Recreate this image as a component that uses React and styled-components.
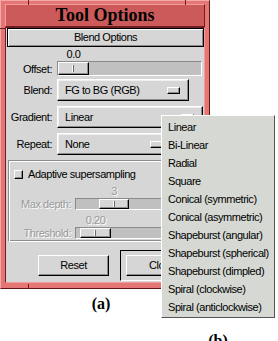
import React from 'react';
import styled, { createGlobalStyle } from 'styled-components';

const uiFont = `"Liberation Sans", Arial, sans-serif`;
const serif = `"Liberation Serif", "Times New Roman", serif`;

const GlobalStyle = createGlobalStyle`
  html, body {
    margin: 0;
    padding: 0;
    background: #fff;
  }
  body {
    font-family: ${uiFont};
    font-size: 11px;
    letter-spacing: -0.45px;
    color: #000;
  }
`;

const Figure = styled.div`
  position: relative;
  width: 278px;
  height: 341px;
  overflow: hidden;
`;

const Window = styled.div`
  position: relative;
  width: 210px;
  box-sizing: border-box;
  background: #e47676;
  border: 1px solid;
  border-color: #f6a8a8 #5e1616 #5e1616 #f6a8a8;
  padding: 3px 4px 5px 4px;
`;

const Notch = styled.div`
  position: absolute;
  background: #6e1e1e;
  ${(p) => (p.$vertical ? 'width: 1px; height: 5px;' : 'width: 5px; height: 1px;')}
  left: ${(p) => p.$x}px;
  top: ${(p) => p.$y}px;
`;

const TitleBar = styled.div`
  height: 23px;
  box-sizing: border-box;
  background: #cd5a5a;
  border: 1px solid;
  border-color: #f29c9c #6e1e1e #6e1e1e #f29c9c;
  font-family: ${serif};
  font-weight: bold;
  font-size: 18px;
  letter-spacing: 0;
  line-height: 20px;
  text-align: center;
  color: #000;
`;

const Content = styled.div`
  background: #d6d6d6;
  border: 1px solid;
  border-color: #6e1e1e #f29c9c #f29c9c #6e1e1e;
  height: 256px;
  box-sizing: border-box;
  display: flex;
  flex-direction: column;
`;

const raised = `
  background: #d6d6d6;
  border: 1px solid;
  border-color: #fff #000 #000 #fff;
  box-shadow: inset -1px -1px 0 #8c8c8c;
`;

const HeaderButton = styled.div`
  margin: 0 0 0 1px;
  width: 197px;
  height: 19px;
  box-sizing: border-box;
  border: 1px solid #000;
  background: #d6d6d6;
  box-shadow: inset 1px 1px 0 #fff, inset -1px -1px 0 #8c8c8c;
  text-align: center;
  line-height: 17px;
`;

const SliderBlock = styled.div`
  display: grid;
  grid-template-columns: ${(p) => p.$labelWidth}px ${(p) => p.$trackWidth}px;
  column-gap: ${(p) => p.$gap}px;
  margin-top: ${(p) => p.$top}px;
  color: ${(p) => (p.$disabled ? '#9a9a9a' : '#000')};
  text-shadow: ${(p) => (p.$disabled ? '1px 1px 0 #fff' : 'none')};
`;

const SliderValue = styled.div`
  grid-column: 2;
  width: ${(p) => p.$thumb}px;
  margin-left: ${(p) => p.$pos + 1}px;
  height: 13px;
  line-height: 13px;
  text-align: center;
`;

const RowLabel = styled.div`
  grid-column: 1;
  text-align: right;
  align-self: center;
  white-space: nowrap;
`;

const Trough = styled.div`
  grid-column: 2;
  height: ${(p) => p.$h}px;
  box-sizing: border-box;
  background: #c0c0c0;
  border: 1px solid;
  border-color: #8a8a8a #fff #fff #8a8a8a;
  display: flex;
`;

const Thumb = styled.div`
  ${raised}
  box-sizing: border-box;
  width: ${(p) => p.$w}px;
  margin-left: ${(p) => p.$pos}px;
  height: 100%;
  display: flex;
  align-items: center;
  justify-content: center;
  &::after {
    content: '';
    width: 1px;
    height: ${(p) => p.$mark}px;
    background: #6a6a6a;
    box-shadow: -1px 0 0 #fff;
  }
`;

const OptionRows = styled.div`
  display: flex;
  flex-direction: column;
  gap: 5px;
  margin-top: 3px;
`;

const OptionRow = styled.div`
  display: grid;
  grid-template-columns: 46px auto;
  column-gap: 5px;
  justify-content: start;
  align-items: center;
`;

const OptionMenu = styled.div`
  ${raised}
  box-shadow: inset -1px -1px 0 #8c8c8c, inset 1px 1px 0 #efefef;
  box-sizing: border-box;
  width: ${(p) => p.$w}px;
  height: 22px;
  display: flex;
  align-items: center;
  justify-content: space-between;
  padding: 0 8px 0 7px;
  white-space: nowrap;
`;

const Indicator = styled.div`
  ${raised}
  box-sizing: border-box;
  width: 13px;
  height: 7px;
`;

const Group = styled.div`
  margin: 5px 0 0 2px;
  width: 192px;
  height: 82px;
  box-sizing: border-box;
  border: 1px solid;
  border-color: #8c8c8c #fff #fff #8c8c8c;
  box-shadow: inset 1px 1px 0 #fff, inset -1px -1px 0 #8c8c8c;
  padding: 6px 0 0 5px;
  display: flex;
  flex-direction: column;
`;

const CheckRow = styled.label`
  display: flex;
  align-items: center;
  gap: 5px;
  height: 14px;
`;

const CheckBox = styled.span`
  ${raised}
  box-sizing: border-box;
  width: 9px;
  height: 9px;
`;

const ActionArea = styled.div`
  display: flex;
  align-items: center;
  margin-top: 8px;
  padding-left: 32px;
  gap: 11px;
`;

const PushButton = styled.div`
  ${raised}
  box-sizing: border-box;
  width: 72px;
  height: 21px;
  line-height: 19px;
  text-align: center;
`;

const DefaultFrame = styled.div`
  border: 1px solid;
  border-color: #000 #fff #fff #000;
  padding: 4px 5px;
`;

const Caption = styled.div`
  font-family: ${serif};
  font-weight: bold;
  font-size: 16px;
  letter-spacing: 0;
  line-height: 18px;
  text-align: center;
  margin-top: ${(p) => p.$top}px;
  width: ${(p) => p.$w}px;
`;

const MenuColumn = styled.div`
  position: absolute;
  left: 161px;
  top: 115px;
  width: 114px;
  display: flex;
  flex-direction: column;
  align-items: center;
`;

const PopupMenu = styled.div`
  width: 114px;
  box-sizing: border-box;
  background: #d6d9d3;
  border: 1px solid;
  border-color: #fff #555 #555 #fff;
  padding: 2px 0 1px 0;
`;

const MenuItem = styled.div`
  height: 18px;
  line-height: 18px;
  padding-left: 6px;
  white-space: nowrap;
`;

const gradients = [
  'Linear',
  'Bi-Linear',
  'Radial',
  'Square',
  'Conical (symmetric)',
  'Conical (asymmetric)',
  'Shapeburst (angular)',
  'Shapeburst (spherical)',
  'Shapeburst (dimpled)',
  'Spiral (clockwise)',
  'Spiral (anticlockwise)',
];

const options = [
  { label: 'Blend:', value: 'FG to BG (RGB)', width: 132 },
  { label: 'Gradient:', value: 'Linear', width: 146 },
  { label: 'Repeat:', value: 'None', width: 115 },
];

function Slider({ label, value, pos, thumb, height, labelWidth, trackWidth, top, disabled }) {
  return (
    <SliderBlock
      $labelWidth={labelWidth}
      $trackWidth={trackWidth}
      $gap={labelWidth > 50 ? 4 : 5}
      $top={top}
      $disabled={disabled}
    >
      <SliderValue $thumb={thumb} $pos={pos}>
        {value}
      </SliderValue>
      <RowLabel>{label}</RowLabel>
      <Trough $h={height}>
        <Thumb $w={thumb} $pos={pos} $mark={height > 13 ? 7 : 6} />
      </Trough>
    </SliderBlock>
  );
}

export default function App() {
  return (
    <Figure>
      <GlobalStyle />
      <Window>
        <Notch $vertical $x={27} $y={-1} />
        <Notch $vertical $x={184} $y={-1} />
        <Notch $x={-1} $y={27} />
        <Notch $vertical $x={27} $y={283} />
        <TitleBar>Tool Options</TitleBar>
        <Content>
          <HeaderButton>Blend Options</HeaderButton>
          <Slider label="Offset:" value="0.0" pos={0} thumb={31} height={15} labelWidth={46} trackWidth={145} top={1} />
          <OptionRows>
            {options.map((o) => (
              <OptionRow key={o.label}>
                <RowLabel>{o.label}</RowLabel>
                <OptionMenu $w={o.width}>
                  <span>{o.value}</span>
                  <Indicator />
                </OptionMenu>
              </OptionRow>
            ))}
          </OptionRows>
          <Group>
            <CheckRow>
              <CheckBox />
              Adaptive supersampling
            </CheckRow>
            <Slider label="Max depth:" value="3" pos={23} thumb={30} height={12} labelWidth={57} trackWidth={122} top={4} disabled />
            <Slider label="Threshold:" value="0.20" pos={4} thumb={31} height={12} labelWidth={57} trackWidth={122} top={4} disabled />
          </Group>
          <ActionArea>
            <PushButton>Reset</PushButton>
            <DefaultFrame>
              <PushButton>Close</PushButton>
            </DefaultFrame>
          </ActionArea>
        </Content>
      </Window>
      <Caption $top={6} $w={202}>(a)</Caption>
      <MenuColumn>
        <PopupMenu>
          {gradients.map((g) => (
            <MenuItem key={g}>{g}</MenuItem>
          ))}
        </PopupMenu>
        <Caption $top={14} $w={114}>(b)</Caption>
      </MenuColumn>
    </Figure>
  );
}
